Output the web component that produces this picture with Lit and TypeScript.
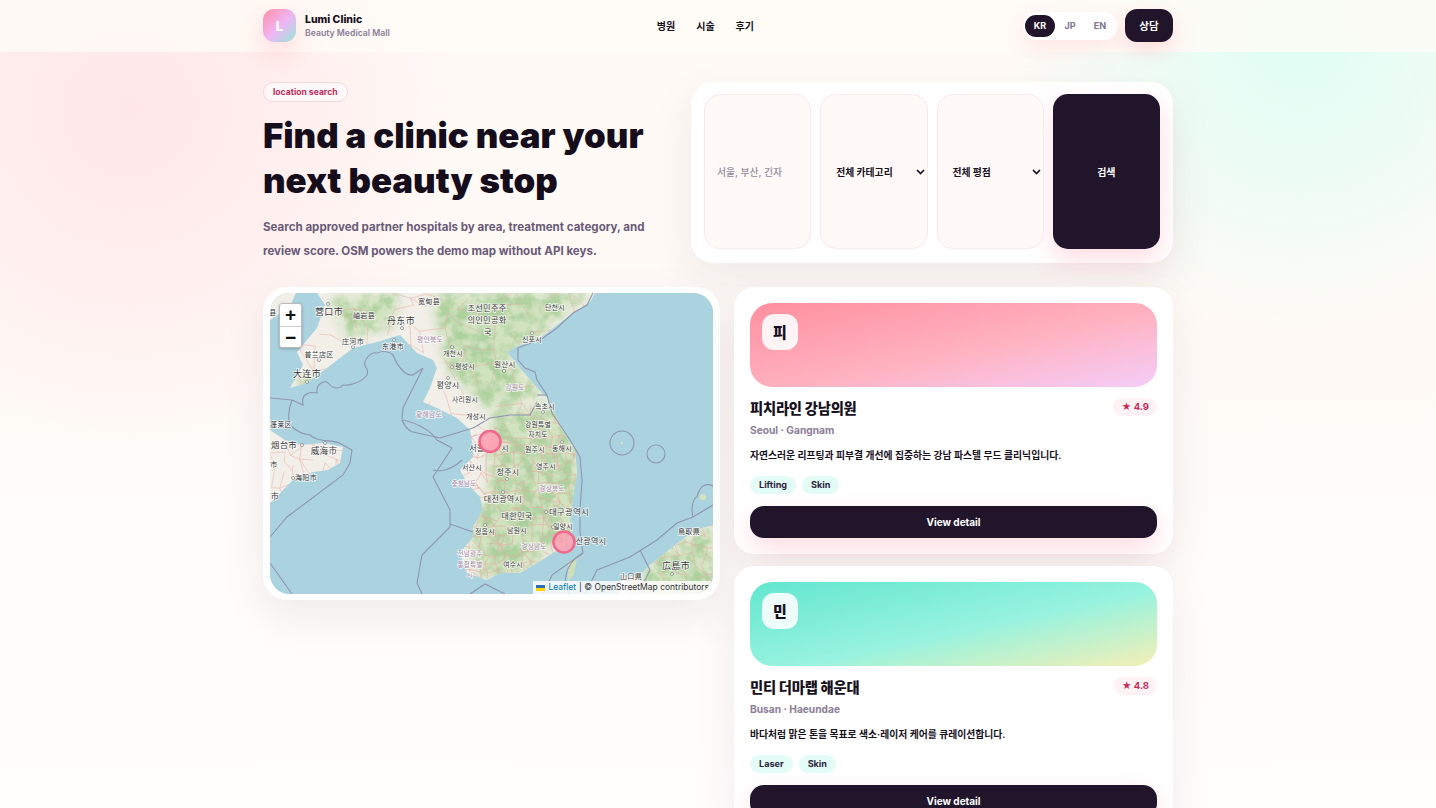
import { LitElement, html, css, svg } from "lit";
import { customElement } from "lit/decorators.js";

type L = [string, number, number, number];
const labels: L[] = [
  ["宽甸县", 429, 302, 7], ["丹东市", 401, 322, 9], ["营口市", 329, 313, 9], ["岫岩县", 364, 316, 7], ["庄河市", 353, 342, 7], ["东港市", 393, 347, 7], ["普兰店区", 319, 355, 7], ["大连市", 307, 375, 9], ["县", 273, 313, 7],
  ["개천시", 453, 354, 7], ["평성시", 465, 367, 7], ["평양시", 448, 386, 8], ["사리원시", 465, 400, 6.8], ["개성시", 476, 417, 7],
  ["조선민주주", 487, 309, 8.2], ["의인민공화", 487, 321, 8.2], ["국", 488, 333, 8.2], ["단천시", 555, 308, 7], ["신포시", 532, 340, 7], ["원산시", 505, 365, 7.4], ["속초시", 545, 407, 7],
  ["강원특별", 538, 425, 6.8], ["자치도", 538, 435, 6.8], ["서울", 477, 449, 8], ["시", 505, 449, 8], ["원주시", 535, 450, 7], ["동해시", 562, 449, 7], ["영주시", 546, 467, 7], ["청주시", 508, 473, 8],
  ["대전광역시", 503, 500, 8], ["대구광역시", 569, 513, 8.4], ["대한민국", 517, 517, 8.2], ["정읍시", 485, 532, 7], ["남원시", 517, 531, 7], ["밀양시", 563, 527, 7], ["산광역시", 591, 542, 8], ["여수시", 513, 565, 6.8], ["서산시", 472, 468, 7],
  ["烟台市", 284, 446, 8.4], ["威海市", 324, 452, 8.6], ["海阳市", 306, 478, 7], ["市", 275, 497, 8], ["市", 274, 465, 7], ["蓬莱区", 281, 425, 6.8], ["広島市", 676, 567, 9], ["鳥取県", 689, 532, 7], ["山口県", 631, 577, 7],
];
const purple: L[] = [
  ["평안북도", 430, 340, 6.8], ["황해남도", 429, 415, 6.8], ["강원도", 515, 388, 6.8], ["충청남도", 464, 484, 6.4], ["경상북도", 552, 489, 6.6], ["경상남도", 534, 547, 6.6], ["전남광주", 470, 554, 6.5], ["통합특별", 470, 565, 6.5], ["시", 470, 575, 6.5],
];
const towns: [number, number][] = [[546, 512], [503, 492], [507, 479], [485, 525], [328, 304], [307, 382], [402, 328], [394, 340], [353, 347], [319, 360], [448, 378], [452, 367], [452, 347], [302, 445], [325, 443], [293, 478], [532, 333], [504, 371], [543, 412], [562, 442], [560, 540], [553, 527], [672, 574]];
const forestMask = [
  "M432 293 L590 293 L525 345 L505 360 L545 392 L490 410 L450 372 L440 330Z",
  "M330 300 L398 293 L392 325 L350 338Z",
  "M495 412 L550 405 L578 450 L578 530 L545 552 L520 572 L480 578 L468 530 L488 500 L490 458Z",
  "M650 560 L713 525 L713 594 L640 594Z",
  "M292 385 L320 372 L312 392Z",
];

function net(x0: number, y0: number, x1: number, y1: number, step: number, seed: number, prob: number): string {
  let s = seed;
  const r = () => ((s = (s * 16807) % 2147483647) / 2147483647);
  const cols = Math.ceil((x1 - x0) / step), rows = Math.ceil((y1 - y0) / step);
  const pts: [number, number][][] = [];
  for (let j = 0; j <= rows; j++) {
    const row: [number, number][] = [];
    for (let i = 0; i <= cols; i++) row.push([+(x0 + i * step + (r() - 0.5) * step * 0.8).toFixed(1), +(y0 + j * step + (r() - 0.5) * step * 0.8).toFixed(1)]);
    pts.push(row);
  }
  let d = "";
  for (let j = 0; j <= rows; j++)
    for (let i = 0; i <= cols; i++) {
      const p = pts[j][i];
      if (i < cols && r() < prob) d += `M${p[0]} ${p[1]}L${pts[j][i + 1][0]} ${pts[j][i + 1][1]}`;
      if (j < rows && r() < prob) d += `M${p[0]} ${p[1]}L${pts[j + 1][i][0]} ${pts[j + 1][i][1]}`;
      if (i < cols && j < rows && r() < prob * 0.45) d += `M${p[0]} ${p[1]}L${pts[j + 1][i + 1][0]} ${pts[j + 1][i + 1][1]}`;
    }
  return d;
}
const roadsDense = net(460, 428, 580, 578, 9, 1234, 0.62);
const roadsSparse = net(300, 293, 600, 425, 18, 777, 0.34) + net(270, 440, 345, 505, 11, 99, 0.5) + net(625, 525, 713, 594, 10, 4242, 0.5);

const borders = [
  "M270 398 L292 400 L303 405 C300 392 312 392 317 393 C316 385 322 381 327 382 C334 390 340 389 343 385 C350 386 362 382 367 375 C370 368 362 366 365 362 C368 354 374 352 377 353 C384 350 390 352 393 355 C398 368 406 376 413 375 L423 368 L403 408 L402 420 C406 430 412 432 413 432 L440 438 L460 432 L473 428",
  "M292 400 C288 410 288 420 290 425 C298 433 304 434 310 435 C320 444 334 438 343 445 L352 450 L350 463 L343 475 L287 517 L270 537",
  "M403 420 C420 424 430 430 437 440 L452 448 L433 477 L450 510 L450 527 L422 555 L417 583 L422 594", "M270 563 L292 594", "M433 470 C440 472 452 470 462 460", "M450 524 L473 532",
  "M593 293 L587 305 L573 313 L557 328 L543 338 L518 348 L518 360 L525 368 L535 372 L537 380 L547 395 L552 413 L570 440 L580 457 L582 480 L580 510 L580 533 L583 553 L552 575 L543 594",
  "M537 395 L547 395", "M583 553 C574 558 568 566 566 575 C564 584 566 590 570 594", "M597 570 L630 557 L657 540 L677 523 L693 517 C690 505 695 497 697 497 C700 484 707 483 713 486", "M693 517 L713 505", "M597 570 L585 594", "M640 550 L650 570 L640 590", "M470 594 L485 584 L505 594",
  "M473 428 L490 418 L510 415 L530 415 L537 402",
];

@customElement("map-art")
export class MapArt extends LitElement {
  static styles = css`
    :host { display: block; width: 100%; height: 100%; }
    svg { display: block; width: 100%; height: 100%; }
    .lbl { font-family: Inter, "Noto Sans CJK KR", "Noto Sans CJK SC", sans-serif; fill: #383838; text-anchor: middle; dominant-baseline: middle; paint-order: stroke; stroke: rgba(255,255,255,.8); stroke-width: 1.6px; font-weight: 400; letter-spacing: .3px; }
    .pur { fill: #a887a8; }
  `;
  render() {
    return html`<svg viewBox="270 293 443 301" preserveAspectRatio="none" xmlns="http://www.w3.org/2000/svg">
      <defs>
        <filter id="forest" filterUnits="userSpaceOnUse" x="270" y="293" width="443" height="301" color-interpolation-filters="sRGB">
          <feTurbulence type="fractalNoise" baseFrequency=".075" numOctaves="3" seed="7" result="n"/>
          <feColorMatrix in="n" type="matrix" values="0 0 0 0 .68  0 0 0 0 .82  0 0 0 0 .62  3.4 0 0 0 -1.25" result="g"/>
          <feGaussianBlur in="SourceGraphic" stdDeviation="5" result="b"/>
          <feComposite in="g" in2="b" operator="in"/>
        </filter>
        <filter id="wash"><feGaussianBlur stdDeviation="7"/></filter>
        <filter id="soft2"><feGaussianBlur stdDeviation=".3"/></filter>
        <clipPath id="land"><path d="M317 293 L325 305 L317 328 L297 352 L303 365 L290 388 L307 383 L327 368 L353 348 L377 342 L400 335 L417 353 L433 360 L437 368 L430 388 L423 402 L437 408 L457 418 L470 430 L473 447 L473 457 L460 470 L467 483 L480 497 L483 510 L473 527 L473 537 L460 553 L467 573 L487 580 L500 573 L520 573 L537 563 L553 553 L573 540 L570 523 L573 497 L577 473 L575 450 L567 438 L557 418 L547 398 L537 388 L520 368 L507 352 L518 346 L540 338 L557 325 L573 313 L590 302 L595 293Z M270 430 L285 440 L302 445 L323 443 L343 447 L340 463 L328 470 L313 472 L293 480 L283 490 L277 497 L270 503Z M713 525 L695 530 L675 545 L650 565 L640 575 L622 577 L618 594 L713 594Z M270 293 L296 293 L290 306 L276 316 L270 320Z"/></clipPath>
      </defs>
      <rect x="270" y="293" width="443" height="301" fill="#aad3df"/>
      <g clip-path="url(#land)">
        <rect x="270" y="293" width="443" height="301" fill="#f2efe9"/>
        <g filter="url(#wash)" fill="#c6deb0" opacity=".75">${forestMask.map((d) => svg`<path d=${d}/>`)}</g>
        <g filter="url(#forest)" fill="#000">${forestMask.map((d) => svg`<path d=${d}/>`)}</g>
        <path d=${roadsDense} fill="none" stroke="#eba9a2" stroke-width=".7" opacity=".85"/>
        <path d=${roadsSparse} fill="none" stroke="#eba9a2" stroke-width=".65" opacity=".75"/>
      </g>
      <path d="M568 562 L577 558 L574 574 L568 582Z" fill="#cfe0b8"/>
      <ellipse cx="703" cy="497" rx="3.5" ry="3" fill="#d5e2bd"/>
      <circle cx="622" cy="443" r="1.2" fill="#d8e2c2"/>
      <g fill="none" stroke="#9095b1" stroke-width="1.1" filter="url(#soft2)">
        ${borders.map((d) => svg`<path d=${d}/>`)}
        <circle cx="622" cy="443" r="12"/>
        <circle cx="656" cy="454" r="9"/>
      </g>
      <g fill="#fff" stroke="#666" stroke-width=".6">${towns.map(([x, y]) => svg`<circle cx=${x} cy=${y} r="1.5"/>`)}</g>
      ${labels.map(([t, x, y, s]) => svg`<text class="lbl" x=${x} y=${y} font-size=${s}>${t}</text>`)}
      ${purple.map(([t, x, y, s]) => svg`<text class="lbl pur" x=${x} y=${y} font-size=${s}>${t}</text>`)}
      <circle cx="490" cy="441.5" r="10.5" fill="#ff9fb3" fill-opacity=".88" stroke="#f3688d" stroke-width="2.6"/>
      <circle cx="564" cy="542" r="10.5" fill="#ff9fb3" fill-opacity=".82" stroke="#f3688d" stroke-width="2.6"/>
    </svg>`;
  }
}

type Clinic = { initial: string; name: string; loc: string; desc: string; rating: string; tags: string[]; tone: string };
const clinics: Clinic[] = [
  { initial: "피", name: "피치라인 강남의원", loc: "Seoul · Gangnam", desc: "자연스러운 리프팅과 피부결 개선에 집중하는 강남 파스텔 무드 클리닉입니다.", rating: "★ 4.9", tags: ["Lifting", "Skin"], tone: "peach" },
  { initial: "민", name: "민티 더마랩 해운대", loc: "Busan · Haeundae", desc: "바다처럼 맑은 톤을 목표로 색소·레이저 케어를 큐레이션합니다.", rating: "★ 4.8", tags: ["Laser", "Skin"], tone: "mint" },
];

@customElement("app-root")
export class AppRoot extends LitElement {
  static styles = css`
    :host { display: block; height: 100vh; overflow: hidden; position: relative; color: #17101d;
      font-family: Inter, "Noto Sans CJK KR", "Noto Sans", sans-serif;
      background:
        radial-gradient(circle 330px at 130px 110px, rgba(255,222,226,.68) 0, rgba(255,224,228,.5) 40%, transparent 100%),
        radial-gradient(circle 290px at 1300px 40px, rgba(210,255,243,.7) 0, rgba(215,255,244,.5) 40%, transparent 100%),
        linear-gradient(180deg, #fffaf6 0, #fffaf6 45%, #fffefd 100%); }
    * { box-sizing: border-box; }
    .hdr { height: 52px; background: rgba(255,251,247,.82); }
    .wrap { width: 910px; margin: 0 auto; }
    .hdr .wrap { height: 51px; display: flex; justify-content: space-between; align-items: center; }
    .brand { display: flex; align-items: center; gap: 9px; }
    .logo { width: 33px; height: 33px; border-radius: 11px; background: linear-gradient(135deg, #ff8fa3, #efb5f5 52%, #96e8d8); color: #fff; font-weight: 800; font-size: 13px; display: grid; place-items: center; box-shadow: 0 10px 28px rgba(255,140,160,.32); }
    .bname { font-size: 10.5px; font-weight: 800; line-height: 15px; }
    .bsub { font-size: 8.7px; font-weight: 600; color: #8c7d98; line-height: 12px; }
    .nav { display: flex; gap: 21px; font-size: 10px; font-weight: 700; margin: -1px 2px 0 0; }
    .right { display: flex; align-items: center; gap: 7px; }
    .lang { display: flex; padding: 3px 3px 3px 2px; background: #fff; border-radius: 15px; box-shadow: 0 8px 22px rgba(255,140,160,.2); font-size: 9px; font-weight: 700; color: #80748b; }
    .lang span { width: 30px; height: 22px; display: grid; place-items: center; border-radius: 11px; }
    .lang .on { background: #21152c; color: #fff; }
    .cta { width: 48px; height: 33px; border-radius: 12px; background: #21152c; color: #fff; display: grid; place-items: center; font-size: 10.5px; font-weight: 700; box-shadow: 0 8px 22px rgba(255,130,150,.28); }
    .hero { display: grid; grid-template-columns: 1fr 482px; padding-top: 30px; }
    .pill { display: block; width: fit-content; height: 20px; line-height: 18px; padding: 0 9px; border: 1px solid #f5d8e0; border-radius: 10px; background: #fff8f8; color: #c22c5c; font-size: 8.6px; font-weight: 700; }
    h1 { margin: 11px 0 0; font-size: 34.8px; line-height: 45px; font-weight: 900; color: #150d1b; }
    .lead { margin: 11.5px 0 0; width: 400px; font-size: 11.55px; line-height: 24px; font-weight: 650; color: #6a5a78; }
    .search { height: 181px; padding: 12px 13px 14px; background: #fff; border-radius: 22px; display: grid; grid-template-columns: repeat(4, 1fr); gap: 9px; box-shadow: 0 16px 44px rgba(50,30,70,.08); }
    .field { border: 1px solid #f8e9ec; border-radius: 16px; background: #fffaf7; display: flex; align-items: center; font-size: 9.8px; font-weight: 700; position: relative; padding-left: 15px; }
    .field.ph { color: #94899c; font-weight: 500; padding-left: 12px; }
    .chev { position: absolute; right: 2px; top: 50%; margin-top: -3px; }
    .go { border-radius: 15px; background: #21152c; color: #fff; display: grid; place-items: center; font-size: 10px; font-weight: 700; box-shadow: 0 10px 24px rgba(255,130,150,.28); }
    .main { display: grid; grid-template-columns: 457fr 439fr; gap: 14px; margin-top: 24px; align-items: start; }
    .mapcard { padding: 6px 7px; height: 313px; background: #fff; border-radius: 24px; box-shadow: 0 16px 44px rgba(50,30,70,.08); }
    .map { position: relative; height: 301px; border-radius: 20px; overflow: hidden; background: #aad3df; }
    .zoom { position: absolute; left: 9px; top: 10px; width: 23px; height: 45px; background: #fff; border-radius: 3px; border: 1px solid #bbb; box-shadow: 0 1px 3px rgba(0,0,0,.25); overflow: hidden; }
    .zoom div { height: 22px; display: grid; place-items: center; font: 700 19px "Liberation Sans", sans-serif; color: #111; line-height: 22px; }
    .zoom div + div { border-top: 1px solid #ccc; }
    .attr { position: absolute; right: 0; bottom: 0; height: 13px; background: rgba(255,255,255,.8); font: 400 8.5px/13px Inter, sans-serif; color: #333; padding: 0 4px 0 3px; white-space: nowrap; display: flex; align-items: center; gap: 3px; }
    .attr b { color: #0078a8; font-weight: 400; }
    .list { display: flex; flex-direction: column; gap: 12px; }
    .card { padding: 16px; background: #fff; border-radius: 20px; box-shadow: 0 16px 44px rgba(50,30,70,.08); }
    .ban { height: 84px; border-radius: 22px; padding: 11px 12px; }
    .ban.peach { background: linear-gradient(168deg, #ff8f9f, #ffb2c0 55%, #f5cdf8); }
    .ban.mint { background: linear-gradient(168deg, #63e6cf, #97f3df 55%, #f4efb5); }
    .thumb { width: 36px; height: 36px; border-radius: 12px; background: rgba(255,255,255,.88); display: grid; place-items: center; padding-bottom: 2px; font-size: 15px; font-weight: 800; }
    .top { display: flex; justify-content: space-between; align-items: flex-start; margin-top: 11px; }
    .name { font-size: 14.3px; font-weight: 800; line-height: 22px; letter-spacing: -.2px; }
    .rate { height: 18px; padding: 0 8px; border-radius: 9px; background: #fff2f4; color: #c22c5c; font-size: 9.5px; font-weight: 700; line-height: 18px; }
    .loc { font-size: 10.2px; font-weight: 650; color: #8c7d98; line-height: 14px; margin-top: 3px; }
    .desc { font-size: 9.8px; font-weight: 600; line-height: 16px; margin-top: 11px; }
    .tags { display: flex; gap: 6px; margin-top: 12px; }
    .tag { height: 18px; line-height: 18px; padding: 0 9px; border-radius: 9px; background: #e4fcf6; color: #2c2440; font-size: 9.1px; font-weight: 700; }
    .btn { margin-top: 12px; height: 32px; border-radius: 14px; background: #21152c; color: #fff; display: grid; place-items: center; font-size: 10px; font-weight: 700; box-shadow: 0 10px 24px rgba(255,130,150,.28); }
  `;
  render() {
    return html`
      <div class="hdr"><div class="wrap">
        <div class="brand"><div class="logo">L</div><div><div class="bname">Lumi Clinic</div><div class="bsub">Beauty Medical Mall</div></div></div>
        <nav class="nav"><span>병원</span><span>시술</span><span>후기</span></nav>
        <div class="right"><div class="lang"><span class="on">KR</span><span>JP</span><span>EN</span></div><div class="cta">상담</div></div>
      </div></div>
      <div class="wrap">
        <section class="hero">
          <div>
            <span class="pill">location search</span>
            <h1>Find a clinic near your<br />next beauty stop</h1>
            <p class="lead">Search approved partner hospitals by area, treatment category, and review score. OSM powers the demo map without API keys.</p>
          </div>
          <div class="search">
            <div class="field ph">서울, 부산, 긴자</div>
            <div class="field">전체 카테고리${this.chev()}</div>
            <div class="field">전체 평점${this.chev()}</div>
            <div class="go">검색</div>
          </div>
        </section>
        <section class="main">
          <div class="mapcard"><div class="map">
            <map-art></map-art>
            <div class="zoom"><div>+</div><div>−</div></div>
            <div class="attr"><svg width="9" height="6" viewBox="0 0 9 6"><rect width="9" height="3" fill="#2a6ebb"/><rect y="3" width="9" height="3" fill="#ffd500"/></svg><b>Leaflet</b> | © OpenStreetMap contributors</div>
          </div></div>
          <div class="list">
            ${clinics.map((c) => html`<article class="card">
              <div class="ban ${c.tone}"><div class="thumb">${c.initial}</div></div>
              <div class="top"><div class="name">${c.name}</div><div class="rate">${c.rating}</div></div>
              <div class="loc">${c.loc}</div>
              <div class="desc">${c.desc}</div>
              <div class="tags">${c.tags.map((t) => html`<span class="tag">${t}</span>`)}</div>
              <div class="btn">View detail</div>
            </article>`)}
          </div>
        </section>
      </div>`;
  }
  chev() {
    return html`<svg class="chev" width="9" height="6" viewBox="0 0 9 6"><path d="M1 1l3.5 3.5L8 1" fill="none" stroke="#17101d" stroke-width="1.7"/></svg>`;
  }
}
